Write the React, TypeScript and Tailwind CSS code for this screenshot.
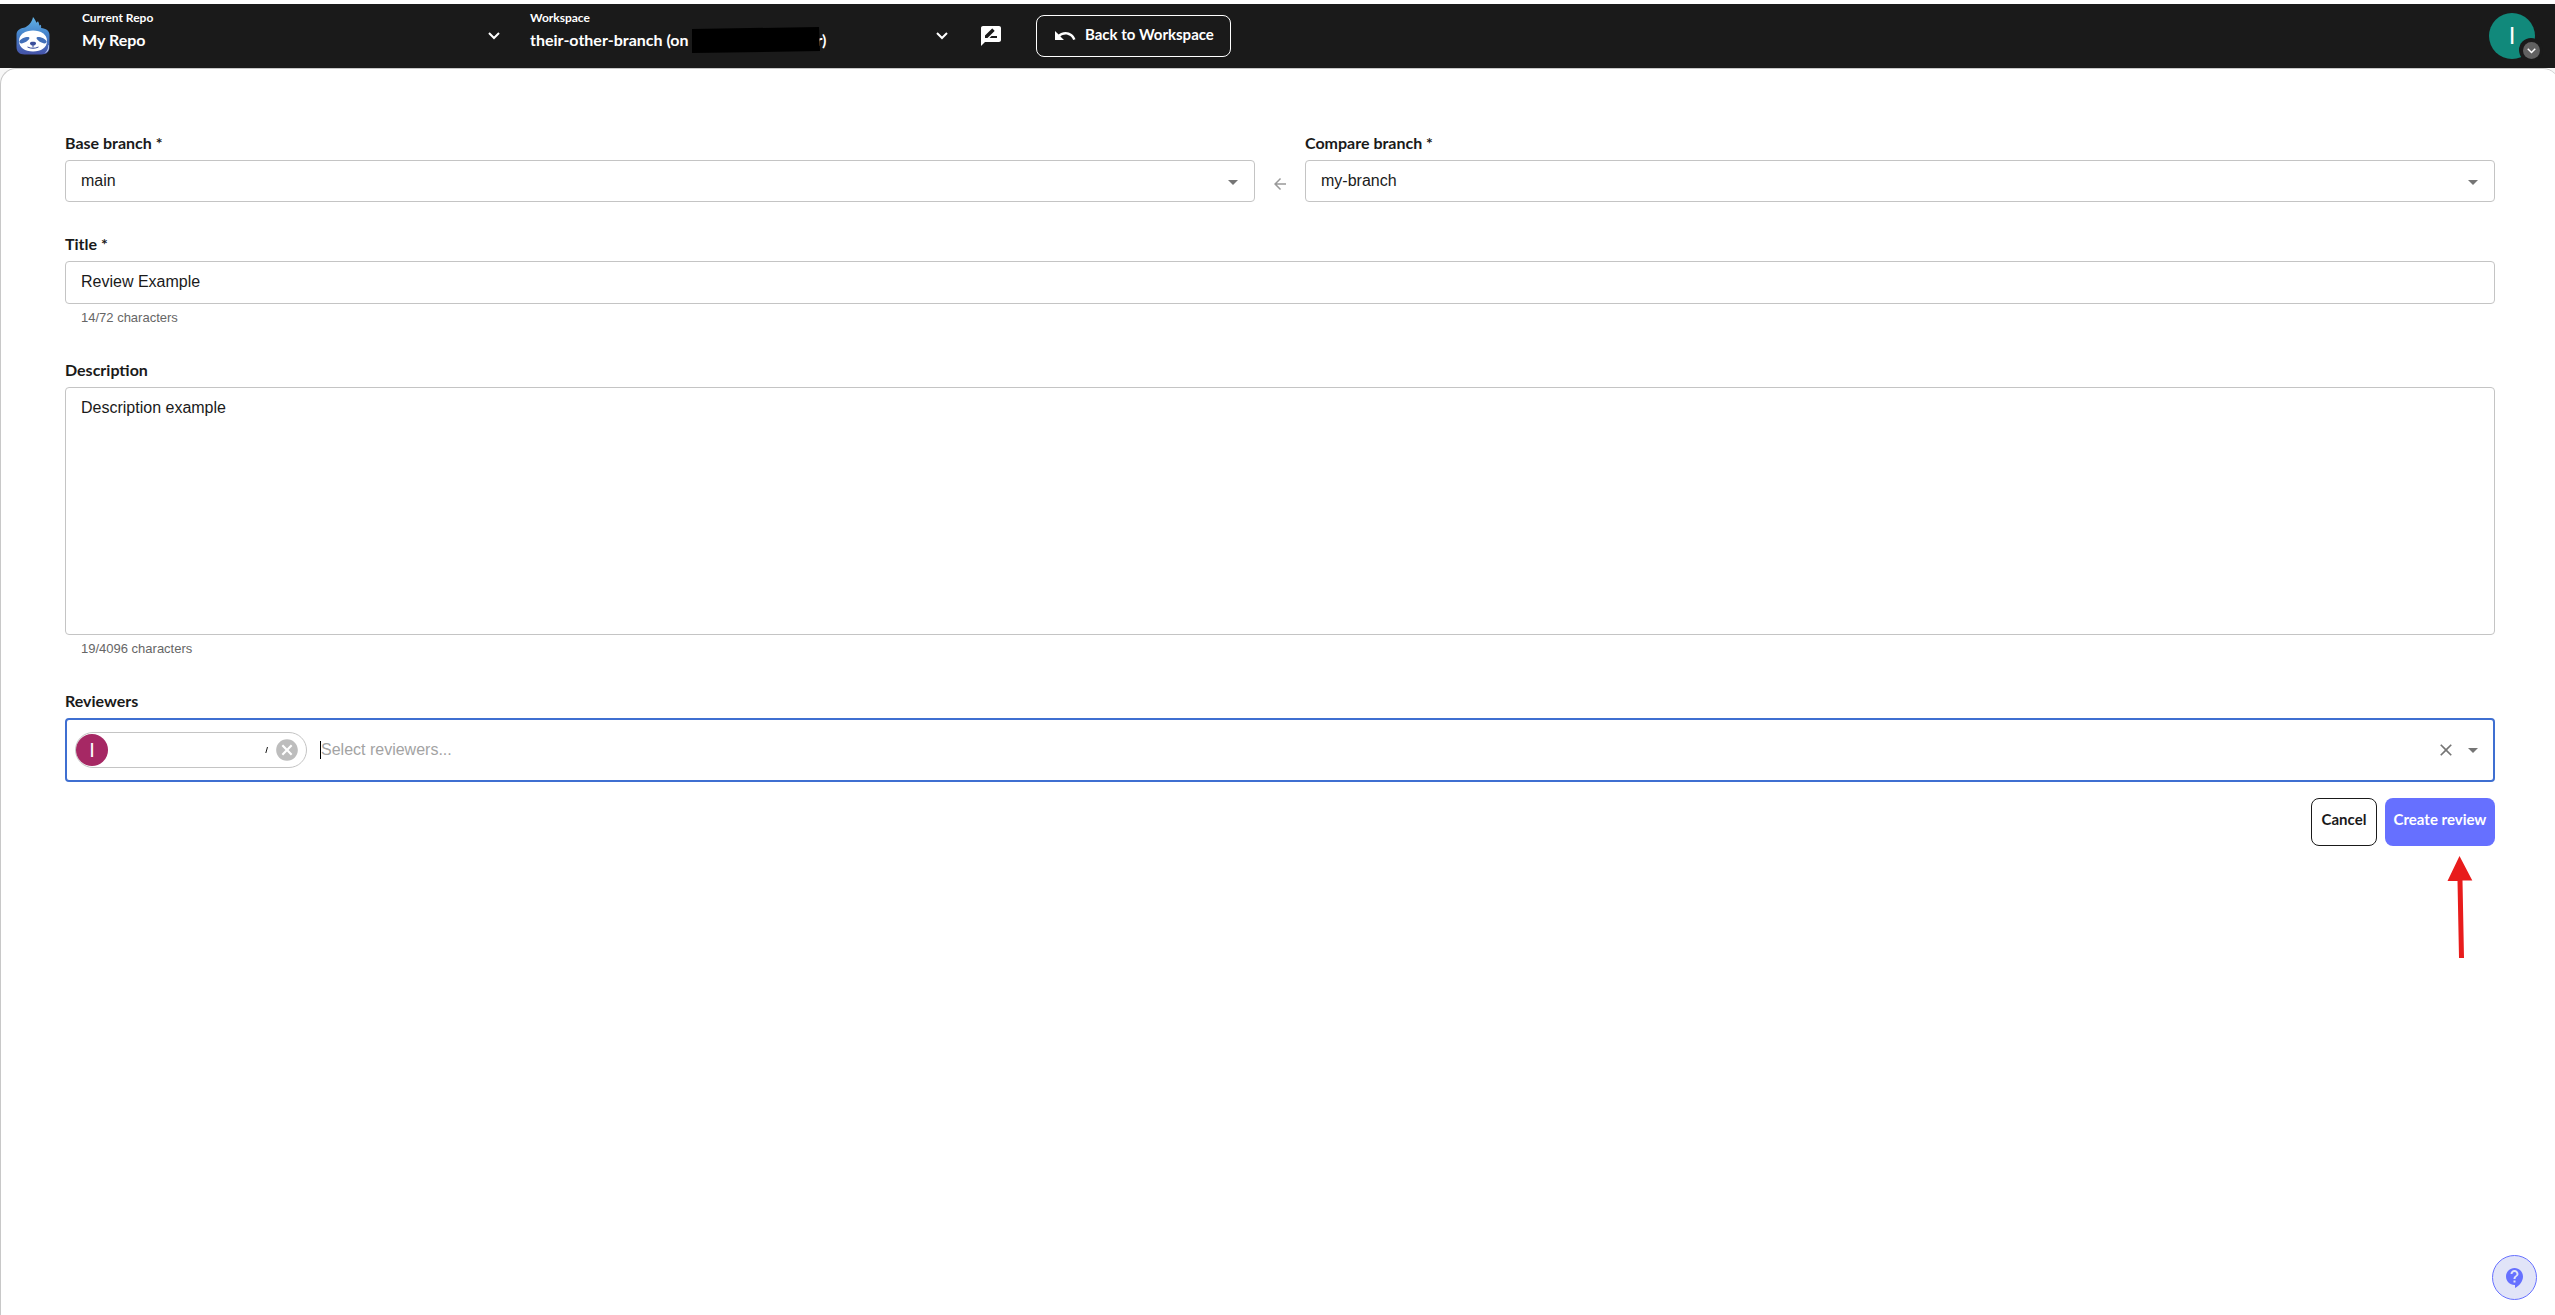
import { useState } from "react";
import type { ReactNode } from "react";
import { MdArrowBack, MdArrowDropDown, MdCancel, MdClose, MdContactSupport, MdRateReview, MdUndo } from "react-icons/md";

const TITLE_LIMIT = 72;
const DESCRIPTION_LIMIT = 4096;

function SlothLogo() {
  return (
    <svg viewBox="0 0 34 38" className="h-[38px] w-[34px]" aria-hidden="true">
      <defs>
        <linearGradient id="fur" x1="0" y1="0" x2="0" y2="1">
          <stop offset="0" stopColor="#63b4e6" />
          <stop offset="0.45" stopColor="#4684cb" />
          <stop offset="1" stopColor="#4553a8" />
        </linearGradient>
      </defs>
      <path
        d="M17 0c1.800 2 2.800 3.800 3.300 5.800l1.700-1.600c1 1.800 1.300 3 1.300 4.300l1.500-.7c.4 1.200.5 2.200.3 3.200 4.800.7 8.400 2.600 8.400 7v12c0 5-3 7.400-8 7.400H8.500c-5 0-8-2.400-8-7.400V18c0-4.300 3-6.500 7.500-7.200C12 9.500 16 5.500 17 0Z"
        fill="url(#fur)"
      />
      <path d="M32.500 28c-.4 4.500-1.700 6.800-4 8.500 2.600-.8 4.500-3 4.500-6.200v-2.300Z" fill="#c9d5f0" />
      <path
        d="M17 13.500c-7.800 0-14 3.700-14 10.500 0 6.500 6 10.500 14 10.500S31 30.500 31 24c0-6.800-6.200-10.500-14-10.500Z"
        fill="#fff"
      />
      <path
        d="M12.300 20c-4 0-7.800 1.800-9 4.500.2 1.700 1.500 2.300 3.200 1.800 2.800-.8 5-2 6.500-4 .8-1.200.5-2.300-.7-2.300ZM21.700 20c4 0 7.800 1.800 9 4.500-.2 1.700-1.500 2.300-3.200 1.800-2.800-.8-5-2-6.500-4-.8-1.200-.5-2.300.7-2.300Z"
        fill="#426fb8"
      />
      <path d="M14 26.200c0-1.200 1.500-1.500 3-1.500s3 .3 3 1.500-1.600 2.500-3 2.500-3-1.300-3-2.500Z" fill="#3b4f9b" />
      <path d="M11.500 30c3.500 1.700 7.500 1.700 11 0M17 28.500v2" fill="none" stroke="#3b4f9b" strokeWidth="1" />
    </svg>
  );
}

function Chevron({ className }: { className: string }) {
  return (
    <svg viewBox="0 0 12 8" className={className} fill="none" stroke="currentColor" strokeWidth="2" aria-hidden="true">
      <path d="M1 1l5 5 5-5" />
    </svg>
  );
}

function HeaderPicker({ caption, children }: { caption: string; children: ReactNode }) {
  return (
    <button type="button" className="flex w-[448px] items-center justify-between pr-[30px] text-left">
      <span className="flex flex-col pb-3">
        <span className="text-[12px] leading-5 font-bold">{caption}</span>
        <span className="flex h-6 items-center text-[16px] font-bold whitespace-pre">{children}</span>
      </span>
      <Chevron className="h-2 w-3" />
    </button>
  );
}

function TopBar() {
  return (
    <header className="flex h-16 items-center bg-[#1a1a1a] pr-5 pl-4 text-white">
      <a href="#home" aria-label="Home" className="mr-8">
        <SlothLogo />
      </a>
      <HeaderPicker caption="Current Repo">My Repo</HeaderPicker>
      <HeaderPicker caption="Workspace">
        {"their-other-branch (on "}
        <svg viewBox="0 0 128 26" className="relative z-10 -mr-1 h-[26px] w-32" aria-hidden="true">
          <path d="M0 2L127 0l1 24L0 26Z" fill="#000" />
        </svg>
        {"r)"}
      </HeaderPicker>
      <button type="button" aria-label="Open reviews" className="mr-8 flex w-[26px] justify-center">
        <MdRateReview className="size-6" />
      </button>
      <button
        type="button"
        className="flex h-[42px] items-center gap-2 rounded-lg border border-white px-4 text-[15px] font-bold"
      >
        <MdUndo className="size-6" />
        <span className="pb-1">Back to Workspace</span>
      </button>
      <button type="button" aria-label="Account" className="relative ml-auto">
        <span className="flex size-[46px] items-center justify-center rounded-full bg-[#11897b] font-['Liberation_Sans'] text-2xl">
          I
        </span>
        <span className="absolute -right-2 -bottom-[3px] flex size-6 items-center justify-center rounded-full bg-[#1a1a1a]">
          <span className="flex size-[17px] items-center justify-center rounded-full bg-[#616161]">
            <Chevron className="mt-px h-[6px] w-[9px]" />
          </span>
        </span>
      </button>
    </header>
  );
}

interface FieldProps {
  id: string;
  label: string;
  helper?: string;
  children: ReactNode;
}

function Field({ id, label, helper, children }: FieldProps) {
  return (
    <div className="flex min-w-0 flex-1 flex-col">
      <label htmlFor={id} className="mb-[7px] text-[16px] leading-5 font-bold">
        {label}
      </label>
      {children}
      {helper && (
        <p className="mt-1 px-4 font-['Liberation_Sans'] text-[13px] leading-5 text-[#666]">{helper}</p>
      )}
    </div>
  );
}

function BranchSelect({ id, options }: { id: string; options: string[] }) {
  return (
    <div className="relative">
      <select
        id={id}
        className="h-[42px] w-full appearance-none rounded border border-[#c4c4c4] bg-white px-[15px] font-['Liberation_Sans'] text-[16px]"
      >
        {options.map((branch) => (
          <option key={branch}>{branch}</option>
        ))}
      </select>
      <MdArrowDropDown className="pointer-events-none absolute top-[10px] right-[10px] size-6 text-[#757575]" />
    </div>
  );
}

export default function App() {
  const [title, setTitle] = useState("Review Example");
  const [description, setDescription] = useState("Description example");

  return (
    <div className="flex min-h-screen flex-col overflow-hidden bg-[#f7f7f7] font-[Lato,sans-serif] text-[#1a1a1a]">
      <div className="h-1 bg-white" />
      <TopBar />

      <main className="-mr-1 flex-1 rounded-t-2xl border-t border-l border-[#c8c8c8] bg-white px-16 pt-16">
        <form className="flex flex-col gap-8" onSubmit={(e) => e.preventDefault()}>
          <div className="flex items-end">
            <Field id="base" label="Base branch *">
              <BranchSelect id="base" options={["main", "my-branch"]} />
            </Field>
            <div className="flex h-9 w-[50px] items-center justify-center text-[#999]">
              <MdArrowBack className="size-[18px]" />
            </div>
            <Field id="compare" label="Compare branch *">
              <BranchSelect id="compare" options={["my-branch", "main"]} />
            </Field>
          </div>

          <Field id="title" label="Title *" helper={`${title.length}/${TITLE_LIMIT} characters`}>
            <input
              id="title"
              value={title}
              maxLength={TITLE_LIMIT}
              onChange={(e) => setTitle(e.target.value)}
              className="h-[43px] rounded border border-[#c4c4c4] px-[15px] pb-0.5 font-['Liberation_Sans'] text-[16px]"
            />
          </Field>

          <Field id="description" label="Description" helper={`${description.length}/${DESCRIPTION_LIMIT} characters`}>
            <textarea
              id="description"
              value={description}
              maxLength={DESCRIPTION_LIMIT}
              onChange={(e) => setDescription(e.target.value)}
              className="h-[248px] resize-none rounded border border-[#c4c4c4] px-[15px] py-2 font-['Liberation_Sans'] text-[16px] leading-6"
            />
          </Field>

          <div className="flex flex-col gap-4">
            <Field id="reviewers" label="Reviewers">
              <div className="flex h-16 items-center rounded border-2 border-[#3f6fd1] px-2 font-['Liberation_Sans']">
                <div className="flex h-9 w-[232px] items-center rounded-full border border-[#c4c4c4] pr-1.5">
                  <span className="mr-auto flex size-8 items-center justify-center rounded-full bg-[#a62864] text-xl text-white">
                    I
                  </span>
                  <svg viewBox="0 0 3 6" className="mr-1.5 h-[6px] w-[3px]" aria-hidden="true">
                    <path d="M2.500 0L.8 6" stroke="#1a1a1a" fill="none" />
                  </svg>
                  <button type="button" aria-label="Remove reviewer" className="text-[#bdbdbd]">
                    <MdCancel className="size-[26px]" />
                  </button>
                </div>
                <span className="ml-[13px] h-[18px] w-px bg-black" />
                <input
                  id="reviewers"
                  placeholder="Select reviewers..."
                  className="min-w-0 flex-1 text-[16px] outline-none placeholder:text-[#a3a3a3]"
                />
                <button type="button" aria-label="Clear reviewers" className="mr-[5px] text-[#757575]">
                  <MdClose className="size-5" />
                </button>
                <button type="button" aria-label="Show reviewers" className="text-[#757575]">
                  <MdArrowDropDown className="size-6" />
                </button>
              </div>
            </Field>

            <div className="relative flex justify-end gap-2 text-[15px] font-bold">
              <button type="button" className="h-12 w-[66px] rounded-lg border border-[#1a1a1a] pb-1.5">
                Cancel
              </button>
              <button type="submit" className="h-12 w-[110px] rounded-lg bg-[#6670ff] pb-1.5 text-white">
                Create review
              </button>
              <svg
                viewBox="0 0 26 102"
                className="pointer-events-none absolute top-[58px] right-[22px] h-[102px] w-[26px]"
                fill="#e81c1c"
                aria-hidden="true"
              >
                <path d="M12.500 0L25.300 24.500h-9.800L17 102h-5L10.500 24.900H.5Z" />
              </svg>
            </div>
          </div>
        </form>
      </main>

      <button
        type="button"
        aria-label="Help"
        className="fixed right-[18px] bottom-[15px] flex size-[45px] items-center justify-center rounded-full border border-[#6670ff] bg-[#e1e4f8] text-[#6670ff]"
      >
        <MdContactSupport className="size-6" />
      </button>
    </div>
  );
}
